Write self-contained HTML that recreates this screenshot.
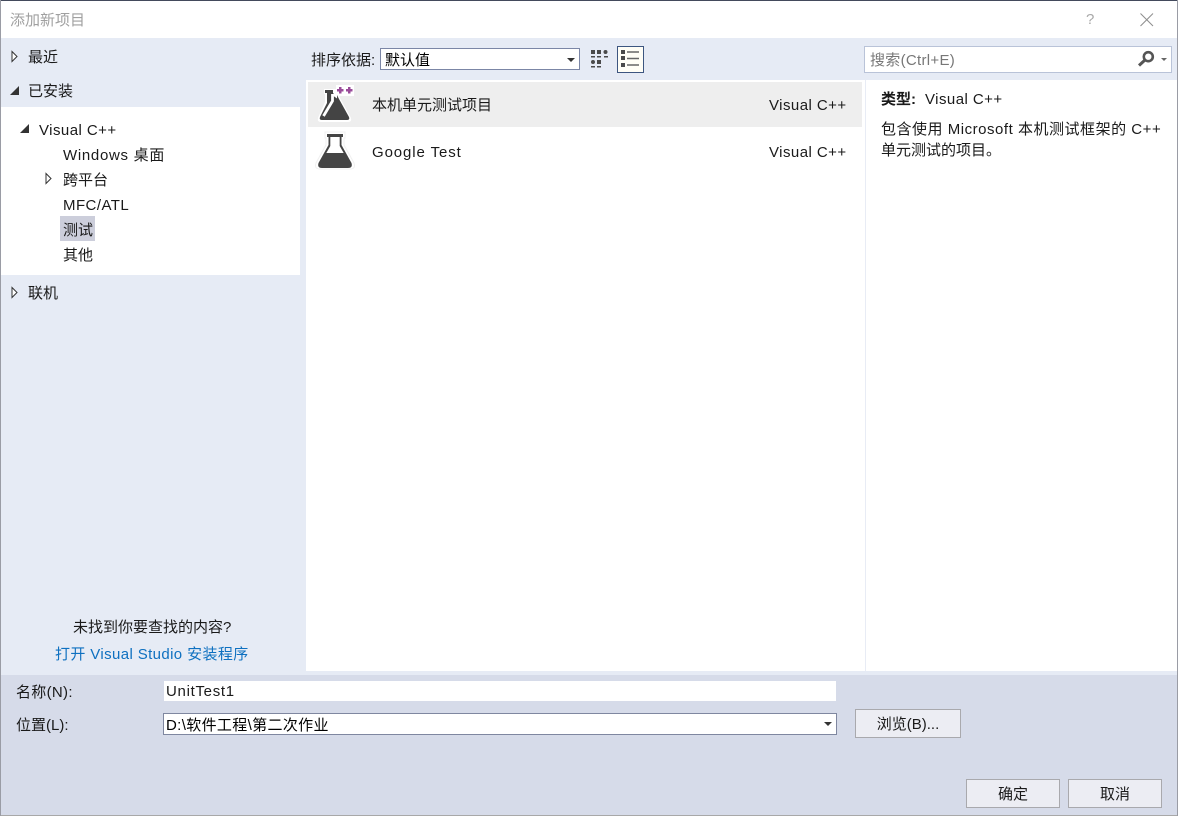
<!DOCTYPE html>
<html lang="zh"><head><meta charset="utf-8"><title>添加新项目</title>
<style>
html,body{margin:0;padding:0;width:1178px;height:816px;overflow:hidden;background:#e6ebf5}
body{position:relative;font-family:"Liberation Sans","Noto Sans CJK SC",sans-serif;font-size:15px;color:#1a1a1a}
.a{position:absolute}
.t{position:absolute;white-space:nowrap;line-height:20px;height:20px}
.btn{position:absolute;background:#ecedf3;border:1px solid #a9a9ad;box-sizing:border-box;text-align:center;line-height:30px}
svg{position:absolute;overflow:visible}
</style></head><body>
<div class="a" style="left:0;top:0;width:1178px;height:38px;background:#fff"></div>
<div class="a" style="left:0;top:0;width:1178px;height:1px;background:#434a5c"></div>
<div class="t" style="left:10px;top:11px;color:#a0a0a0">添加新项目</div>
<div class="t" style="left:1086px;top:10px;color:#a9a9a9;font-size:15px">?</div>
<svg style="left:1140px;top:13px" width="14" height="14"><path d="M.5.5 13 13M13 .5.5 13" stroke="#8e8e8e" fill="none"/></svg>

<div class="a" style="left:1px;top:107px;width:299px;height:168px;background:#fff"></div>
<svg style="left:11px;top:50px" width="8" height="13"><path d="M1 1.500v10l5-5z" fill="#fff" stroke="#333"/></svg>
<div class="t" style="left:28px;top:48px">最近</div>
<svg style="left:9px;top:85px" width="10" height="10"><path d="M1 10h9V1z" fill="#333"/></svg>
<div class="t" style="left:28px;top:82px">已安装</div>
<svg style="left:20px;top:124px" width="10" height="10"><path d="M0 9h9V0z" fill="#333"/></svg>
<div class="t" style="left:39px;top:121px;letter-spacing:.45px">Visual C++</div>
<div class="t" style="left:63px;top:146px;letter-spacing:.7px">Windows 桌面</div>
<svg style="left:45px;top:172px" width="8" height="13"><path d="M1 1.500v10l5-5z" fill="#fff" stroke="#333"/></svg>
<div class="t" style="left:63px;top:171px">跨平台</div>
<div class="t" style="left:63px;top:196px;letter-spacing:.45px">MFC/ATL</div>
<div class="a" style="left:60px;top:216px;width:35px;height:25px;background:#cccedb"></div>
<div class="t" style="left:63px;top:221px">测试</div>
<div class="t" style="left:63px;top:246px">其他</div>
<svg style="left:11px;top:286px" width="8" height="13"><path d="M1 1.500v10l5-5z" fill="#fff" stroke="#333"/></svg>
<div class="t" style="left:28px;top:284px">联机</div>
<div class="t" style="left:73px;top:618px">未找到你要查找的内容?</div>
<div class="t" style="left:55px;top:645px;color:#0e70c0;letter-spacing:.38px">打开 Visual Studio 安装程序</div>

<div class="t" style="left:311px;top:51px">排序依据:</div>
<div class="a" style="left:380px;top:48px;width:200px;height:22px;box-sizing:border-box;background:#fff;border:1px solid #7b86a6"></div>
<div class="t" style="left:385px;top:51px;color:#000">默认值</div>
<svg style="left:567px;top:58px" width="8" height="5"><path d="M0 0h8L4 4z" fill="#333"/></svg>
<svg style="left:590px;top:49px" width="18" height="20" fill="#4a4a4a">
<path d="M1 1h4v4H1zM7 1h4v4H7zM15.500 1a2 2 0 1 1 0 4 2 2 0 0 1 0-4zM1 7h4v1.500H1zM7 7h4v1.500H7zM14 7h4v1.500h-4zM3 11a2 2 0 1 1 0 4 2 2 0 0 1 0-4zM7 11h4v4H7zM1 17h4v1.500H1zM7 17h4v1.500H7z"/></svg>
<div class="a" style="left:617px;top:46px;width:27px;height:27px;box-sizing:border-box;background:#fffef6;border:1px solid #3d5680"></div>
<svg style="left:621px;top:49px" width="20" height="20" fill="#4a4a4a">
<path d="M0 1h4v4H0zM0 7h4v4H0zM0 14h4v4H0z"/><path d="M6 3h12M6 9.500h12M6 16h12" stroke="#666" stroke-width="1.600"/></svg>
<div class="a" style="left:864px;top:46px;width:308px;height:27px;box-sizing:border-box;background:#fff;border:1px solid #b9c3d8"></div>
<div class="t" style="left:870px;top:51px;color:#777;letter-spacing:.3px">搜索(Ctrl+E)</div>
<svg style="left:1137px;top:50px" width="34" height="18" fill="none"><circle cx="11.300" cy="6.700" r="4.500" stroke="#555" stroke-width="2.600"/><path d="M8 10 2 15.500" stroke="#555" stroke-width="3"/><path d="M24 8h6l-3 3z" fill="#666"/></svg>

<div class="a" style="left:306px;top:80px;width:872px;height:591px;background:#fff"></div>
<div class="a" style="left:865px;top:80px;width:1px;height:591px;background:#e8ecf5"></div>
<div class="a" style="left:308px;top:82px;width:554px;height:45px;background:#eeeeee"></div>
<svg style="left:316px;top:84px" width="42" height="42">
<path d="M8 5h12l4 9 11 20q1 4-3 4H5q-4 0-3-4L9 18V10H8z" fill="#fff"/>
<path d="M20 1h18v11H20z" fill="#fff"/>
<path d="M9 6h8v3H9z" fill="#444"/>
<path d="M11 9h9l3 6 10 18q1 3-2 3H6q-3 0-2-3l7-14z" fill="#444"/>
<path d="M16.500 10v7L7.500 32" stroke="#fff" stroke-width="2.800" fill="none"/>
<path d="M21 14.500V9h-3.500v3z" fill="#fff"/>
<path d="M21 5h2V3h2.500v2h2v2.500h-2v2H23v-2h-2zM30 5h2V3h2.500v2h2v2.500h-2v2H32v-2h-2z" fill="#9a4b9a"/>
</svg>
<svg style="left:316px;top:131px" width="40" height="40">
<path d="M9 1h20v6h-1v7l10 18q2 6-4 6H4q-6 0-4-6l10-18V7H9z" fill="#fff" stroke="#f0f0f0"/>
<path d="M11 3h16v3H11z" fill="#444"/>
<path fill="#444" d="M12.500 6v8L2.500 32Q1 37 6 37H32Q37 37 35.500 32L25.500 14V6h-1.800v9l4 7H10.300l4-7V6z"/>
</svg>
<div class="t" style="left:372px;top:96px">本机单元测试项目</div>
<div class="t" style="left:769px;top:96px;letter-spacing:.45px">Visual C++</div>
<div class="t" style="left:372px;top:143px;letter-spacing:.9px">Google Test</div>
<div class="t" style="left:769px;top:143px;letter-spacing:.45px">Visual C++</div>
<div class="t" style="left:881px;top:90px"><b>类型:</b><span style="margin-left:9px;letter-spacing:.45px">Visual C++</span></div>
<div class="t" style="left:881px;top:120px;letter-spacing:.52px">包含使用 Microsoft 本机测试框架的 C++</div>
<div class="t" style="left:881px;top:141px">单元测试的项目。</div>

<div class="a" style="left:0;top:675px;width:1178px;height:141px;background:#d6dbe9"></div>
<div class="a" style="left:0;top:815px;width:1178px;height:1px;background:#a8a8a8"></div>
<div class="a" style="left:0;top:0;width:1px;height:816px;background:#9a9ca5"></div>
<div class="a" style="left:1177px;top:0;width:1px;height:816px;background:#9a9ca5"></div>
<div class="t" style="left:16px;top:683px;letter-spacing:.3px">名称(N):</div>
<div class="a" style="left:164px;top:681px;width:672px;height:20px;background:#fff"></div>
<div class="t" style="left:166px;top:682px;letter-spacing:.7px">UnitTest1</div>
<div class="t" style="left:16px;top:716px">位置(L):</div>
<div class="a" style="left:163px;top:713px;width:674px;height:22px;box-sizing:border-box;background:#fff;border:1px solid #7f87a0"></div>
<div class="t" style="left:166px;top:716px;color:#000;letter-spacing:.35px">D:\软件工程\第二次作业</div>
<svg style="left:824px;top:722px" width="8" height="5"><path d="M0 0h8L4 4z" fill="#333"/></svg>
<div class="btn" style="left:855px;top:709px;width:106px;height:29px">浏览(B)...</div>
<div class="btn" style="left:966px;top:779px;width:94px;height:29px">确定</div>
<div class="btn" style="left:1068px;top:779px;width:94px;height:29px">取消</div>
</body></html>
